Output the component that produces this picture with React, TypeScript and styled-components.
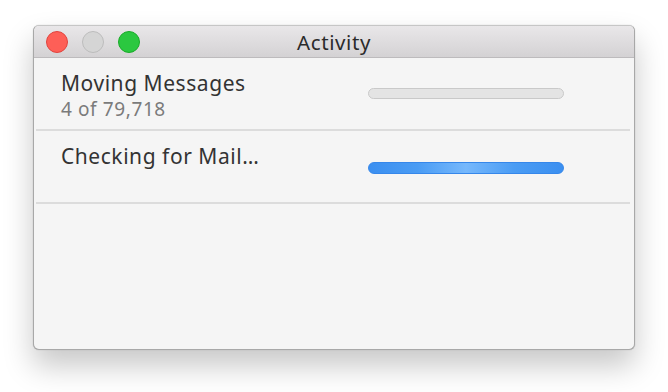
import styled, { createGlobalStyle } from 'styled-components';

const GlobalStyle = createGlobalStyle`
  html, body {
    margin: 0;
    padding: 0;
    background: #ffffff;
  }
  body {
    font-family: "Noto Sans", "Liberation Sans", sans-serif;
  }
`;

type Activity = {
  title: string;
  detail?: string;
  kind: 'idle' | 'busy';
};

const activities: Activity[] = [
  { title: 'Moving Messages', detail: '4 of 79,718', kind: 'idle' },
  { title: 'Checking for Mail…', kind: 'busy' },
];

const App = () => {
  return (
    <Page>
      <GlobalStyle />
      <Window>
        <TitleBar>
          <Lights>
            <Light color="#fe5f57" edge="#e0443e" />
            <Light color="#d5d5d5" edge="#bcbcbc" />
            <Light color="#2bc840" edge="#1aab29" />
          </Lights>
          <Title>Activity</Title>
        </TitleBar>
        <List>
          {activities.map((a) => (
            <Row key={a.title}>
              <Texts>
                <RowTitle>{a.title}</RowTitle>
                {a.detail && <RowDetail>{a.detail}</RowDetail>}
              </Texts>
              <Bar kind={a.kind} />
            </Row>
          ))}
        </List>
      </Window>
    </Page>
  );
};

export default App;

const Page = styled.div`
  width: 668px;
  height: 392px;
  padding: 25px 0 0 33px;
  box-sizing: border-box;
  overflow: hidden;
`;

const Window = styled.div`
  width: 602px;
  height: 325px;
  box-sizing: border-box;
  background: #f5f5f5;
  border: 1px solid #a8a8a8;
  border-top-color: #c6c6c6;
  border-radius: 6px;
  overflow: hidden;
  box-shadow: 0 16px 30px rgba(0, 0, 0, 0.22), 0 0 1px rgba(0, 0, 0, 0.3);
  display: flex;
  flex-direction: column;
`;

const TitleBar = styled.div`
  position: relative;
  height: 31px;
  flex: none;
  display: flex;
  align-items: center;
  justify-content: center;
  background: linear-gradient(#e9e7e9, #d4d2d4);
  border-bottom: 1px solid #bdbbbd;
`;

const Lights = styled.div`
  position: absolute;
  left: 12px;
  top: 5px;
  display: flex;
  gap: 14px;
`;

const Light = styled.span<{ color: string; edge: string }>`
  width: 22px;
  height: 22px;
  box-sizing: border-box;
  border-radius: 50%;
  background: ${(p) => p.color};
  border: 1px solid ${(p) => p.edge};
`;

const Title = styled.div`
  font-size: 20.5px;
  color: #2b2b2b;
  letter-spacing: 0.6px;
`;

const List = styled.div`
  display: flex;
  flex-direction: column;
  padding: 0 4px 0 2px;
`;

const Row = styled.div`
  height: 73px;
  box-sizing: border-box;
  display: grid;
  grid-template-columns: 1fr 196px;
  align-items: center;
  padding: 0 66px 0 25px;
  border-bottom: 2px solid #dcdcdc;
`;

const Texts = styled.div`
  align-self: start;
  padding-top: 13px;
  display: flex;
  flex-direction: column;
`;

const RowTitle = styled.div`
  font-size: 21px;
  line-height: 25px;
  letter-spacing: 0.55px;
  color: #333333;
`;

const RowDetail = styled.div`
  margin-top: 2px;
  font-size: 19px;
  line-height: 22px;
  letter-spacing: 0.6px;
  color: #7b7b7b;
`;

const Bar = styled.div<{ kind: 'idle' | 'busy' }>`
  height: ${(p) => (p.kind === 'busy' ? '12px' : '11px')};
  margin-top: ${(p) => (p.kind === 'busy' ? '2px' : '-1px')};
  box-sizing: border-box;
  border-radius: 6px;
  ${(p) =>
    p.kind === 'busy'
      ? `background: linear-gradient(90deg, #3b8ff0 0%, #4a9cf4 25%, #76b8fc 50%, #4a9cf4 75%, #3b8ff0 100%);
         border: 1px solid #3687ea;`
      : `background: #e4e4e4;
         border: 1px solid #c9c9c9;`}
`;
